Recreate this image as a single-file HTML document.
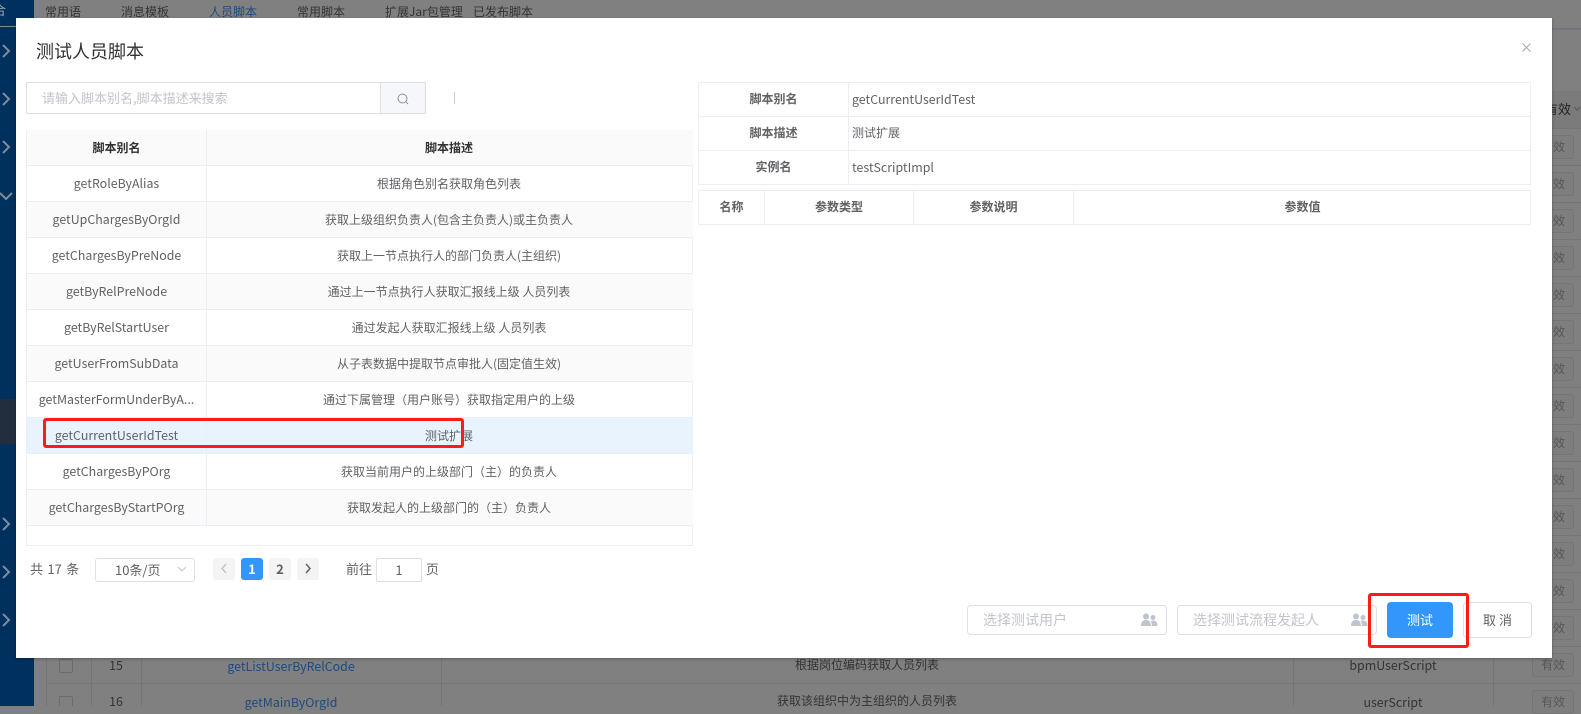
<!DOCTYPE html>
<html lang="zh-CN"><head><meta charset="utf-8"><title>测试人员脚本</title>
<style>
*{box-sizing:border-box}
html,body{margin:0;padding:0;width:1581px;height:706px;overflow:hidden;background:#808080;font-family:"Noto Sans CJK SC","Liberation Sans",sans-serif;font-size:12px;color:#606266}
.a{position:absolute}
.t{position:absolute;white-space:nowrap;line-height:20px}
.c{text-align:center}
.l{font-size:12.4px}
.bg{color:#333}
.line{position:absolute;background:#ebeef5}
.row{position:absolute;left:27px;width:666px;height:36px;border-bottom:1px solid #ebeef5}
.row .n{position:absolute;left:0;width:180px;top:0;height:35px;line-height:35px;text-align:center;border-right:1px solid #ebeef5;white-space:nowrap;overflow:hidden;font-size:12.4px}
.row .d{position:absolute;left:180px;right:2px;top:0;height:35px;line-height:35px;text-align:center;white-space:nowrap}
.alt{background:#fafafa}
.red{position:absolute;border:3px solid #ff1d13;border-radius:3px}
.btn{position:absolute;border-radius:3px;background:#f4f4f5;width:22px;height:22px;top:558px;text-align:center;line-height:22px;font-weight:700;font-size:13px;color:#606266}
.eff{position:absolute;left:1532px;width:42px;height:24px;border:1px solid #757575;border-radius:3px;background:#7e7e7e;color:#575757;line-height:22px;text-align:center;font-size:12px}
.lab{font-weight:700}
</style></head>
<body>
<!-- background page -->
<div class="a" style="left:0;top:0;width:34px;height:706px;background:#00305e"></div>
<div class="a" style="left:0;top:26px;width:16px;height:1px;background:#7f8c99"></div>
<div class="a" style="left:0;top:399px;width:16px;height:45px;background:#222e3e"></div>
<div class="t" style="left:-7px;top:0;color:#a0a8b0;font-size:13px">合</div>
<svg class="a" style="left:0;top:0" width="16" height="706" fill="none" stroke="#7f8c99" stroke-width="2">
<path d="M3 45l6 6-6 6M3 93l6 6-6 6M3 141l6 6-6 6M0 193l6 6 6-6M3 518l6 6-6 6M3 566l6 6-6 6M3 614l6 6-6 6"/></svg>
<div class="t bg" style="left:45px;top:2px">常用语</div>
<div class="t bg" style="left:121px;top:2px">消息模板</div>
<div class="t" style="left:209px;top:2px;color:#1d4a80">人员脚本</div>
<div class="t bg" style="left:297px;top:2px">常用脚本</div>
<div class="t bg" style="left:385px;top:2px">扩展Jar包管理</div>
<div class="t bg" style="left:473px;top:2px">已发布脚本</div>
<div class="a" style="left:1552px;top:28px;width:29px;height:2px;background:#73737a"></div>
<div class="a" style="left:1552px;top:91px;width:29px;height:37px;background:#7b7b7b"></div>
<div class="a" style="left:1552px;top:128px;width:29px;height:556px;background:repeating-linear-gradient(to bottom,#757578 0,#757578 1px,transparent 1px,transparent 37px)"></div>
<div class="t" style="left:1545px;top:99px;color:#222;font-size:13px">有效</div>
<svg class="a" style="left:1573px;top:106px" width="8" height="6" fill="none" stroke="#555"><path d="M1 1l3 3 3-3"/></svg>
<div class="eff" style="top:135px">有效</div><div class="eff" style="top:172px">有效</div><div class="eff" style="top:209px">有效</div>
<div class="eff" style="top:246px">有效</div><div class="eff" style="top:283px">有效</div><div class="eff" style="top:320px">有效</div>
<div class="eff" style="top:357px">有效</div><div class="eff" style="top:394px">有效</div><div class="eff" style="top:431px">有效</div>
<div class="eff" style="top:468px">有效</div><div class="eff" style="top:505px">有效</div><div class="eff" style="top:542px">有效</div>
<div class="eff" style="top:579px">有效</div><div class="eff" style="top:616px">有效</div><div class="eff" style="top:653px">有效</div>
<div class="eff" style="top:690px">有效</div>
<div class="a" style="left:46px;top:683px;width:1535px;height:1px;background:#757578"></div>
<div class="a" style="left:46px;top:658px;width:1px;height:48px;background:#757578"></div>
<div class="a" style="left:91px;top:658px;width:1px;height:48px;background:#757578"></div>
<div class="a" style="left:141px;top:658px;width:1px;height:48px;background:#757578"></div>
<div class="a" style="left:441px;top:658px;width:1px;height:48px;background:#757578"></div>
<div class="a" style="left:1293px;top:658px;width:1px;height:48px;background:#757578"></div>
<div class="a" style="left:1493px;top:658px;width:1px;height:48px;background:#757578"></div>
<div class="a" style="left:59px;top:659px;width:14px;height:14px;border:1px solid #6b6b6b;border-radius:2px"></div>
<div class="a" style="left:59px;top:696px;width:14px;height:10px;border:1px solid #6b6b6b;border-bottom:0;border-radius:2px 2px 0 0"></div>
<div class="t c bg l" style="left:91px;width:50px;top:655px">15</div>
<div class="t c bg l" style="left:91px;width:50px;top:691px">16</div>
<div class="t c l" style="left:141px;width:300px;top:656px;color:#1d4a80">getListUserByRelCode</div>
<div class="t c l" style="left:141px;width:300px;top:692px;color:#1d4a80">getMainByOrgId</div>
<div class="t c bg" style="left:441px;width:852px;top:655px">根据岗位编码获取人员列表</div>
<div class="t c bg" style="left:441px;width:852px;top:691px">获取该组织中为主组织的人员列表</div>
<div class="t c bg l" style="left:1293px;width:200px;top:655px">bpmUserScript</div>
<div class="t c bg l" style="left:1293px;width:200px;top:692px">userScript</div>

<!-- dialog -->
<div class="a" style="left:16px;top:18px;width:1536px;height:640px;background:#fff;box-shadow:0 1px 3px rgba(0,0,0,.3)"></div>
<div class="t" style="left:36px;top:39px;font-size:18px;line-height:24px;color:#303133">测试人员脚本</div>
<svg class="a" style="left:1522px;top:43px" width="9" height="9" stroke="#a5a9b0" fill="none"><path d="M.5.5l8 8M8.500.5l-8 8"/></svg>

<!-- search -->
<div class="a" style="left:26px;top:82px;width:400px;height:32px;border:1px solid #dcdfe6;border-radius:2px"></div>
<div class="a" style="left:380px;top:82px;width:46px;height:32px;background:#f5f7fa;border:1px solid #dcdfe6"></div>
<div class="t" style="left:42px;top:88px;color:#c0c4cc;font-size:13px">请输入脚本别名,脚本描述来搜索</div>
<svg class="a" style="left:396px;top:92px" width="14" height="14" fill="none" stroke="#8e9299"><circle cx="6.500" cy="6.500" r="4.500"/><path d="M10 10l2 2"/></svg>
<div class="a" style="left:454px;top:92px;width:1px;height:12px;background:#c8ccd2"></div>

<!-- left table -->
<div class="a" style="left:26px;top:130px;width:667px;height:416px;border:1px solid #ebeef5"></div>
<div class="row alt" style="top:130px;color:#303133;font-weight:700"><div class="n" style="font-weight:700;color:#303133;font-size:12px">脚本别名</div><div class="d">脚本描述</div></div>
<div class="row" style="top:166px"><div class="n">getRoleByAlias</div><div class="d">根据角色别名获取角色列表</div></div>
<div class="row alt" style="top:202px"><div class="n">getUpChargesByOrgId</div><div class="d">获取上级组织负责人(包含主负责人)或主负责人</div></div>
<div class="row" style="top:238px"><div class="n">getChargesByPreNode</div><div class="d">获取上一节点执行人的部门负责人(主组织)</div></div>
<div class="row alt" style="top:274px"><div class="n">getByRelPreNode</div><div class="d">通过上一节点执行人获取汇报线上级 人员列表</div></div>
<div class="row" style="top:310px"><div class="n">getByRelStartUser</div><div class="d">通过发起人获取汇报线上级 人员列表</div></div>
<div class="row alt" style="top:346px"><div class="n">getUserFromSubData</div><div class="d">从子表数据中提取节点审批人(固定值生效)</div></div>
<div class="row" style="top:382px"><div class="n">getMasterFormUnderByA...</div><div class="d">通过下属管理（用户账号）获取指定用户的上级</div></div>
<div class="row" style="top:418px;background:#e9f3fd"><div class="n">getCurrentUserIdTest</div><div class="d">测试扩展</div></div>
<div class="row" style="top:454px"><div class="n">getChargesByPOrg</div><div class="d">获取当前用户的上级部门（主）的负责人</div></div>
<div class="row alt" style="top:490px"><div class="n">getChargesByStartPOrg</div><div class="d">获取发起人的上级部门的（主）负责人</div></div>

<!-- pagination -->
<div class="t" style="left:30px;top:559px;font-size:13px;word-spacing:1.500px">共 17 条</div>
<div class="a" style="left:95px;top:558px;width:100px;height:24px;border:1px solid #dcdfe6;border-radius:3px"></div>
<div class="t" style="left:115px;top:560px;font-size:13px">10条/页</div>
<svg class="a" style="left:177px;top:566px" width="10" height="7" fill="none" stroke="#c0c4cc"><path d="M1 1l4 4 4-4"/></svg>
<div class="btn" style="left:213px;color:#c0c4cc"><svg width="8" height="11" style="margin-top:5px" fill="none" stroke="#c0c4cc" stroke-width="1.500"><path d="M6 1L2 5.500 6 10"/></svg></div>
<div class="btn" style="left:241px;background:#3296fa;color:#fff">1</div>
<div class="btn" style="left:269px">2</div>
<div class="btn" style="left:297px"><svg width="8" height="11" style="margin-top:5px" fill="none" stroke="#606266" stroke-width="1.500"><path d="M2 1l4 4.500L2 10"/></svg></div>
<div class="t" style="left:346px;top:559px;font-size:13px">前往</div>
<div class="a" style="left:376px;top:558px;width:46px;height:24px;border:1px solid #dcdfe6;border-radius:2px;text-align:center;line-height:22px;font-size:13px">1</div>
<div class="t" style="left:426px;top:559px;font-size:13px">页</div>

<!-- right info table -->
<div class="a" style="left:698px;top:82px;width:833px;height:103px;border:1px solid #ebeef5"></div>
<div class="line" style="left:698px;top:116px;width:833px;height:1px"></div>
<div class="line" style="left:698px;top:150px;width:833px;height:1px"></div>
<div class="line" style="left:848px;top:82px;width:1px;height:103px"></div>
<div class="t c lab" style="left:699px;width:149px;top:89px">脚本别名</div>
<div class="t c lab" style="left:699px;width:149px;top:123px">脚本描述</div>
<div class="t c lab" style="left:699px;width:149px;top:157px">实例名</div>
<div class="t l" style="left:852px;top:89px">getCurrentUserIdTest</div>
<div class="t" style="left:852px;top:123px">测试扩展</div>
<div class="t l" style="left:852px;top:157px">testScriptImpl</div>

<div class="a" style="left:698px;top:190px;width:833px;height:35px;border:1px solid #ebeef5"></div>
<div class="line" style="left:764px;top:190px;width:1px;height:35px"></div>
<div class="line" style="left:913px;top:190px;width:1px;height:35px"></div>
<div class="line" style="left:1073px;top:190px;width:1px;height:35px"></div>
<div class="t c lab" style="left:699px;width:65px;top:197px">名称</div>
<div class="t c lab" style="left:765px;width:148px;top:197px">参数类型</div>
<div class="t c lab" style="left:914px;width:159px;top:197px">参数说明</div>
<div class="t c lab" style="left:1074px;width:457px;top:197px">参数值</div>

<!-- footer -->
<div class="a" style="left:967px;top:605px;width:200px;height:30px;border:1px solid #dcdfe6;border-radius:4px"></div>
<div class="t" style="left:983px;top:610px;color:#c0c4cc;font-size:14px">选择测试用户</div>
<div class="a" style="left:1177px;top:605px;width:200px;height:30px;border:1px solid #dcdfe6;border-radius:4px"></div>
<div class="t" style="left:1193px;top:610px;color:#c0c4cc;font-size:14px">选择测试流程发起人</div>
<svg class="a" style="left:1141px;top:613px" width="17" height="14" fill="#c0c4cc"><circle cx="5" cy="3.500" r="3"/><path d="M0 13c0-4 2-6 5-6s5 2 5 6z"/><circle cx="12" cy="4.500" r="2.500"/><path d="M11 13c0-2-.500-4-1.500-5 1-.5 2-.5 3-.5 2.500 0 4 2 4 5.500z"/></svg>
<svg class="a" style="left:1351px;top:613px" width="17" height="14" fill="#c0c4cc"><circle cx="5" cy="3.500" r="3"/><path d="M0 13c0-4 2-6 5-6s5 2 5 6z"/><circle cx="12" cy="4.500" r="2.500"/><path d="M11 13c0-2-.500-4-1.500-5 1-.5 2-.5 3-.5 2.500 0 4 2 4 5.500z"/></svg>
<div class="a" style="left:1387px;top:602px;width:66px;height:36px;background:#3296fa;border-radius:4px;color:#fff;text-align:center;line-height:36px;font-size:13px">测试</div>
<div class="a" style="left:1463px;top:602px;width:69px;height:36px;border:1px solid #dcdfe6;border-radius:4px;text-align:center;line-height:34px;color:#606266;font-size:13px">取 消</div>

<!-- annotations -->
<div class="red" style="left:43px;top:418px;width:421px;height:30px"></div>
<div class="red" style="left:1368px;top:593px;width:101px;height:55px"></div>
</body></html>
